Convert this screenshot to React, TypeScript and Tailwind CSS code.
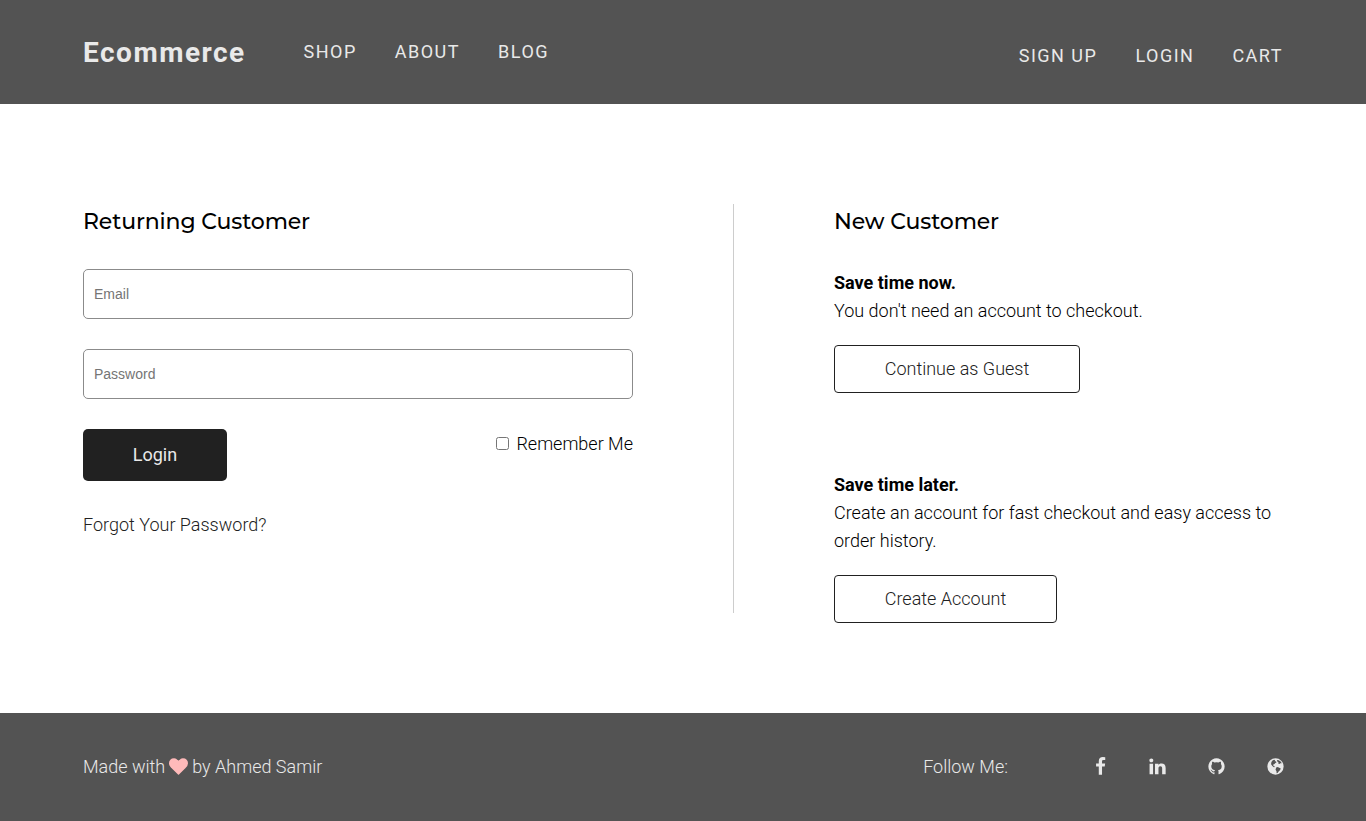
const left = ["SHOP", "ABOUT", "BLOG"];
const right = ["SIGN UP", "LOGIN", "CART"];

const heart =
  "M896 1664q-26 0-44-18l-624-602q-10-8-27.500-26t-55.500-65.500-68-97.500-53.500-121-23.500-138q0-220 127-344t351-124q62 0 126.500 21.500t120 58 95.500 68.500 76 68q36-36 76-68t95.500-68.500 120-58 126.500-21.500q224 0 351 124t127 344q0 221-229 450l-623 600q-18 18-44 18z";
const facebook =
  "M1343 12v264h-157q-86 0-116 36t-30 108v189h293l-39 296h-254v759h-306v-759h-255v-296h255v-218q0-186 104-288.500t277-102.500q147 0 228 12z";
const linkedin =
  "M477 625v991h-330v-991h330zm21-306q1 73-50.500 122t-135.500 49h-2q-82 0-132-49t-50-122q0-74 51.500-122.500t134.500-48.500 133 48.500 51 122.500zm1166 729v568h-329v-530q0-105-40.500-164.500t-126.500-59.500q-63 0-105.500 34.500t-63.500 85.500q-11 30-11 81v553h-329q2-399 2-647t-1-296l-1-48h329v144h-2q20-32 41-56t56.500-52 87-43.500 114.500-15.500q171 0 275 113.500t104 332.500z";
const github =
  "M896 128q209 0 385.500 103t279.500 279.500 103 385.500q0 251-146.500 451.500t-378.500 277.500q-27 5-40-7t-13-30q0-3 .5-76.500t.5-134.500q0-97-52-142 57-6 102.500-18t94-39 81-66.500 53-105 20.500-150.500q0-119-79-206 37-91-8-204-28-9-81 11t-92 44l-38 24q-93-26-192-26t-192 26q-16-11-42.500-27t-83.500-38.500-85-13.500q-45 113-8 204-79 87-79 206 0 85 20.500 150t52.500 105 80.500 67 94 39 102.500 18q-39 36-49 103-21 10-45 15t-57 5-65.500-21.500-55.500-62.500q-19-32-48.500-52t-49.500-24l-20-3q-21 0-29 4.500t-5 11.500 9 14 13 12l7 5q22 10 43.500 38t31.500 51l10 23q13 38 44 61.500t67 30 69.500 7 55.500-3.500l23-4q0 38 .5 88.500t.5 54.500q0 18-13 30t-40 7q-232-77-378.500-277.500t-146.500-451.500q0-209 103-385.500t279.500-279.500 385.500-103z";
const globe =
  "M896 128a768 768 0 1 0 0 1536a768 768 0 1 0 0-1536zM640 300l150-50 70 60-40 80 110 20 60 100-110 60-70 100-120 40-20 90 100 50 60 90-80 20-150-100-120-180 30-220zM1040 280l160 20 180 130 110 170-130-20-90 80-140-60 60-110-130-60zM960 980l150-40 130 70 140 60-40 150-130 120-120 160-90 40-10-200-90-130z";

function Icon({ d, className }: { d: string; className: string }) {
  return (
    <svg viewBox="0 0 1792 1792" fill="currentColor" fillRule="evenodd" aria-hidden="true" className={className}>
      <path d={d} />
    </svg>
  );
}

const inputClass =
  "block h-[50px] w-full rounded-[5px] border border-[#8b8b8b] px-[10px] font-['Liberation_Sans',sans-serif] text-[14px] font-normal placeholder:text-[#757575]";

export default function App() {
  return (
    <div className="flex min-h-[821px] flex-col bg-white font-[Roboto,sans-serif] text-[18px] font-light leading-[28px] text-[#212121]">
      <header className="flex h-[104px] justify-between bg-[#535353] px-[83px] text-[#e9e9e9]">
        <div className="flex">
          <div className="mt-[39px] w-[220.500px] text-[28px] font-bold tracking-[1.5px]">Ecommerce</div>
          <nav className="mt-[38px] flex gap-[38px] font-normal tracking-[1.5px]">
            {left.map((t) => <a key={t} href="#">{t}</a>)}
          </nav>
        </div>
        <nav className="mt-[42px] flex gap-[38px] font-normal tracking-[1.5px]">
          {right.map((t) => <a key={t} href="#">{t}</a>)}
        </nav>
      </header>
      <main className="flex h-[609px] px-[83px] pt-[100px]">
        <section className="h-[409px] w-[651px] border-r border-[#cdcdcd] pr-[100px]">
          <h2 className="mt-[4px] font-[Montserrat,sans-serif] text-[22px] font-medium tracking-[-0.12px] text-black">Returning Customer</h2>
          <input type="email" className={`mt-[33px] ${inputClass}`} placeholder="Email" />
          <input type="password" className={`mt-[30px] ${inputClass}`} placeholder="Password" />
          <div className="mt-[30px] flex items-start justify-between">
            <button className="h-[52px] w-[144px] rounded-[5px] bg-[#212121] font-normal text-[#e9e9e9]">Login</button>
            <label className="mt-px flex items-center text-black">
              <input type="checkbox" className="mr-[7px] mb-[2px] size-[13px]" />
              Remember Me
            </label>
          </div>
          <a href="#" className="mt-[30px] block">Forgot Your Password?</a>
        </section>
        <section className="box-content w-[449px] pl-[100px]">
          <h2 className="mt-[4px] font-[Montserrat,sans-serif] text-[22px] font-medium tracking-[-0.12px] text-black">New Customer</h2>
          <p className="mt-[33px] font-bold text-black">Save time now.</p>
          <p className="text-black">You don't need an account to checkout.</p>
          <a href="#" className="mt-[20px] flex h-[48px] w-[246px] items-center justify-center rounded-[4px] border border-[#212121]">Continue as Guest</a>
          <p className="mt-[78px] font-bold text-black">Save time later.</p>
          <p className="text-black">Create an account for fast checkout and easy access to order history.</p>
          <a href="#" className="mt-[20px] flex h-[48px] w-[223px] items-center justify-center rounded-[4px] border border-[#212121]">Create Account</a>
        </section>
      </main>
      <footer className="flex h-[108px] items-center justify-between bg-[#535353] pl-[83px] pr-[81px] text-[#e9e9e9]">
        <div className="flex items-center">
          Made with
          <Icon d={heart} className="mr-[4px] mb-px ml-[4px] size-[19px] text-[#ffbaba]" />
          by Ahmed Samir
        </div>
        <div className="flex items-center">
          <span className="mr-[83px]">Follow Me:</span>
          <Icon d={facebook} className="mr-[38px] mb-[2px] size-[19px]" />
          <Icon d={linkedin} className="mr-[40px] mb-[2px] size-[19px]" />
          <Icon d={github} className="mr-[40px] mb-[2px] size-[19px]" />
          <Icon d={globe} className="mb-[2px] size-[19px]" />
        </div>
      </footer>
    </div>
  );
}
